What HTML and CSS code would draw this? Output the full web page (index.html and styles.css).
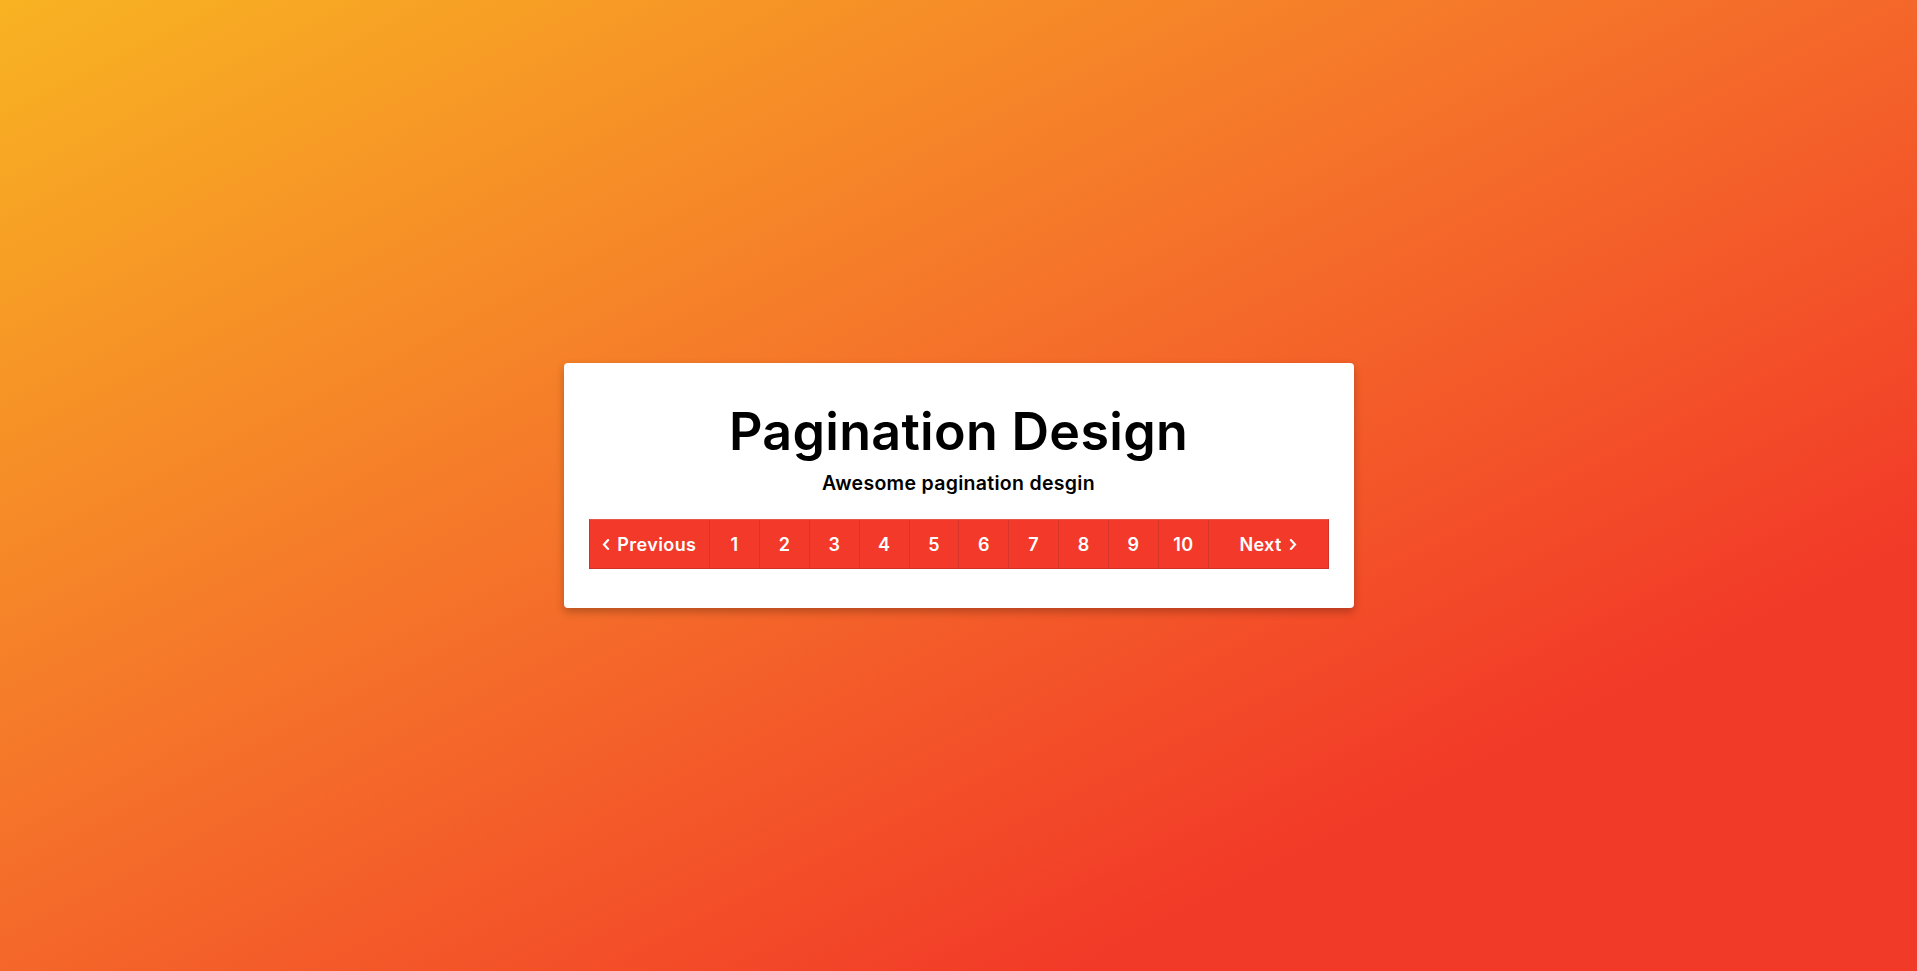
FILE: index.html
```html
<!DOCTYPE html>
<html lang="en">
<head>
<meta charset="utf-8">
<title>Pagination Design</title>
<link rel="stylesheet" href="styles.css">
</head>
<body>
<main class="stage">
  <section class="card">
    <h1 class="title">Pagination Design</h1>
    <p class="subtitle">Awesome pagination desgin</p>
    <nav class="pager">
      <a class="cell wide" href="#"><svg class="chev" viewBox="0 0 10 14" width="8" height="11"><path d="M7.5 1.5 L2.5 7 L7.5 12.5" fill="none" stroke="#fff" stroke-width="2.8" stroke-linecap="square"/></svg>Previous</a>
      <a class="cell" href="#">1</a>
      <a class="cell" href="#">2</a>
      <a class="cell" href="#">3</a>
      <a class="cell" href="#">4</a>
      <a class="cell" href="#">5</a>
      <a class="cell" href="#">6</a>
      <a class="cell" href="#">7</a>
      <a class="cell" href="#">8</a>
      <a class="cell" href="#">9</a>
      <a class="cell" href="#">10</a>
      <a class="cell wide" href="#">Next<svg class="chev next" viewBox="0 0 10 14" width="8" height="11"><path d="M2.5 1.5 L7.5 7 L2.5 12.5" fill="none" stroke="#fff" stroke-width="2.8" stroke-linecap="square"/></svg></a>
    </nav>
  </section>
</main>
</body>
</html>
```
FILE: styles.css
```css
html, body {
  margin: 0;
  padding: 0;
  height: 100%;
}
body {
  font-family: Inter, "Open Sans", sans-serif;
  background: linear-gradient(to bottom right, #f8b322 0%, #f5772a 40%, #f23a28 78%, #f23a28 100%);
  min-height: 971px;
}
.stage {
  min-height: 971px;
  display: flex;
  align-items: center;
  justify-content: center;
}
.card {
  width: 740px;
  padding: 37px 25px 39px;
  background: #fff;
  border-radius: 4px;
  box-shadow: 0 4px 8px rgba(0, 0, 0, 0.25);
  text-align: center;
}
.title {
  margin: 0;
  font-size: 52px;
  font-weight: 600;
  line-height: 64px;
  letter-spacing: 0.3px;
  color: #000;
}
.subtitle {
  margin: 7px 0 0;
  font-size: 19.5px;
  font-weight: 600;
  line-height: 24px;
  letter-spacing: 0.3px;
  color: #000;
}
.pager {
  margin-top: 24px;
  display: flex;
  height: 50px;
  box-sizing: border-box;
  border: 1px solid #cf3328;
  border-top-color: #e8574a;
  background: #f33a2a;
}
.cell {
  width: 50px;
  display: flex;
  align-items: center;
  justify-content: center;
  color: #fff;
  text-decoration: none;
  font-size: 18px;
  font-weight: 600;
  letter-spacing: 0.4px;
  border-left: 1px solid #d6362a;
  box-sizing: border-box;
}
.cell:first-child {
  border-left: none;
}
.cell.wide {
  width: 120px;
  gap: 7px;
}
.chev {
  display: block;
}
```
